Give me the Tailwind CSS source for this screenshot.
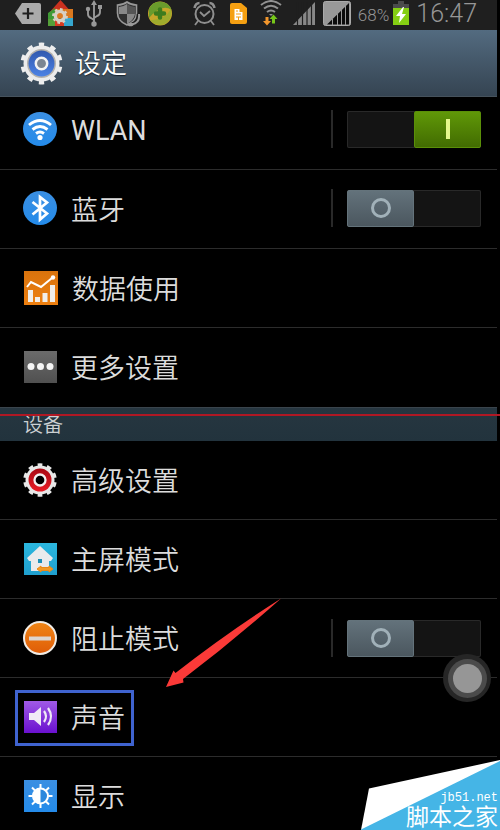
<!DOCTYPE html>
<html lang="zh-CN">
<head>
<meta charset="utf-8">
<meta name="viewport" content="width=device-width, initial-scale=1">
<title>设定</title>
<script src="https://cdn.jsdelivr.net/npm/@tailwindcss/browser@4"></script>
</head>
<body class="bg-black">
<div class="relative min-h-screen overflow-hidden bg-black pr-[3px] font-[Roboto,'Noto_Sans_CJK_SC',sans-serif] text-[#dcdcdc]">

  <!-- Status bar -->
  <div class="flex h-[30px] items-center justify-between bg-[#1f1f1f] pr-5 pl-[15px] text-[#969696]">
    <div class="flex gap-[7px]">
      <svg class="h-[30px] w-[26px]" viewBox="15 0 26 30" aria-hidden="true"><path d="M22 3H39q2 0 2 2V22q0 2-2 2H22L15 13.500z" fill="#aaa"/><path d="M28 8v11M22.500 13.500h11" stroke="#1f1f1f" stroke-width="2.200"/></svg>
      <svg class="h-[30px] w-[25px]" viewBox="48 0 25 30" aria-hidden="true"><path d="M48 14L60.500 0 73 14z" fill="#c9311f"/><path d="M48 13l7-5v18h-7z" fill="#3f9a35"/><path d="M55 9h18v9H55z" fill="#d9781f"/><path d="M61 18h12v8H61z" fill="#36a7cf"/><path d="M48 19h8v7h-8z" fill="#55a038"/><path d="M55 20h9v6h-9z" fill="#d63b22"/><circle cx="60" cy="16" r="4.500" fill="none" stroke="#d8d0c4" stroke-width="3.600"/><circle cx="60" cy="16" r="6.800" fill="none" stroke="#d8d0c4" stroke-width="2.200" pathLength="16" stroke-dasharray="1"/><circle cx="60" cy="16" r="2.700" fill="#dc7b20"/></svg>
      <svg class="h-[30px] w-[28px]" viewBox="80 0 28 30" aria-hidden="true"><g fill="none" stroke="#999" stroke-width="1.900"><path d="M94 4v20M88 9v5q0 3 3 4l3 2M100 8v4q0 3-3 4l-3 2"/></g><path d="M94 0l3 5h-6zM98 5h4v4h-4z" fill="#999"/><circle cx="88" cy="9" r="2.200" fill="#999"/><circle cx="94" cy="24" r="2.700" fill="#999"/></svg>
      <svg class="h-[30px] w-[26px]" viewBox="115 0 26 30" aria-hidden="true"><path d="M127 2q4 3 9.500 3v8q0 8-9.500 12-9.500-4-9.500-12V5q5.500 0 9.500-3z" fill="#303030" stroke="#999" stroke-width="1.600"/><path d="M127 4v10h-8V7q4 0 8-3zM127 14h8q-1 6-8 10z" fill="#888"/><path d="M127 4q4 3 8 3v7h-8z" fill="#555"/><path d="M139 14q1 9-7 11" fill="none" stroke="#1f1f1f" stroke-width="5"/><path d="M139 14q1 9-7 10.500" fill="none" stroke="#999" stroke-width="2"/><ellipse cx="130.500" cy="24.500" rx="3" ry="1.800" fill="#999"/></svg>
      <svg class="h-[30px] w-[24px]" viewBox="148 0 24 30" aria-hidden="true"><circle cx="160" cy="13.500" r="12" fill="#c7a72a"/><path d="M149 9A12 12 0 0 1 171.500 10Q162 3 149 18z" fill="#699b2c"/><path d="M150 20q14 1 21-11 2 10-6 15-9 3-15-4z" fill="#9fac2d"/><path d="M160 9.500v8M156 13.500h8" stroke="#3e7c1e" stroke-width="4.500" stroke-linecap="round"/></svg>
    </div>
    <div class="flex items-center gap-[7px]">
      <svg class="h-[30px] w-[24px]" viewBox="195 0 24 30" aria-hidden="true"><g fill="none" stroke="#8f8f8f" stroke-width="2"><circle cx="206.500" cy="14" r="9"/><path d="M202 12l4 4 6-5M200 21l-3 4M213 21l3 4" stroke-width="1.800"/><path d="M196.500 8q1-5 5-5M216.500 8q-1-5-5-5" stroke-width="2.600"/></g></svg>
      <svg class="h-[30px] w-[28px]" viewBox="225 0 28 30" aria-hidden="true"><path d="M233 3h9l6 5v14q0 2-2 2h-13q-2 0-2-2V5q0-2 2-2z" fill="#f5a012"/><path d="M235.500 9h5v3h3v8h-8z" fill="#fff"/><path d="M237 11h2M237 14h5M237 17h5M239.500 17v3" stroke="#f5a012"/></svg>
      <svg class="h-[30px] w-[26px]" viewBox="261 0 26 30" aria-hidden="true"><g fill="none" stroke="#929292" stroke-width="2"><path d="M263 5q10-8 20 0M266 8.500q7-5.500 14 0M269 12q4-3 8 0"/></g><path d="M271 14h4l-2 2z" fill="#929292"/><path d="M267.500 17h3v4h2.500l-4 4.500-4-4.500h2.500z" fill="#f2962c"/><path d="M274 23.500V19h-2.500l4-4.500 4 4.500H277v4.500z" fill="#76c61a"/></svg>
      <svg class="h-[30px] w-[24px]" viewBox="294 0 24 30" aria-hidden="true"><path d="M295 25L317 2V25z" fill="#888"/><path d="M299.500 2v24M304.500 2v24M309 2v24M313.500 2v24" stroke="#1f1f1f" stroke-width="1.200"/></svg>
      <svg class="h-[30px] w-[28px]" viewBox="325 0 28 30" aria-hidden="true"><rect x="325.500" y="1.500" width="27" height="24" rx="2" fill="#999" stroke="#aaa"/><path d="M329 24.500L351 3V24.500z" fill="#0c0c0c"/><path d="M334.500 19v6M339.500 14v11M343.500 10v15M347.500 6v19" stroke="#999" stroke-width="1"/></svg>
      <div class="flex items-center gap-1">
        <span class="text-[17px] leading-7 font-light">68%</span>
        <svg class="h-[30px] w-[16px]" viewBox="392 0 16 30" aria-hidden="true"><path d="M397 1h6v3h5v5h-16V4h5z" fill="#4b4b4b"/><path d="M392 8h16v17h-16z" fill="#85cf13"/><path d="M402 7l-7 9h4l-1 7 7-9h-4l2-7z" fill="#fff"/></svg>
      </div>
      <time class="pb-0.5 text-[25px] leading-7 font-light">16:47</time>
    </div>
  </div>

  <!-- Title bar -->
  <header class="flex h-[67px] items-center gap-3 border-b border-[#46525c] bg-linear-to-b from-[#536b80] to-[#354452] pl-5">
    <svg class="size-[43px]" viewBox="-21.500 -21.500 43 43" aria-hidden="true">
      <defs><linearGradient id="blue" x2="0" y2="1"><stop stop-color="#3158ae"/><stop offset="1" stop-color="#4c82e4"/></linearGradient></defs>
      <circle r="18.500" fill="none" stroke="#eee" stroke-width="5" pathLength="20" stroke-dasharray=".9 1.100" stroke-dashoffset=".45" transform="rotate(-90)"/>
      <circle r="18" fill="#ececec"/><circle r="14.500" fill="#b5b2ad"/><circle r="13" fill="url(#blue)"/><circle r="5.700" fill="#7b8592" stroke="#f2f2f2" stroke-width="2.500"/>
    </svg>
    <h1 class="pt-0.5 text-[26px] leading-8 font-[350] text-white [text-shadow:0_1px_1px_#18222c]">设定</h1>
  </header>

  <main class="text-[27px] leading-9">
    <section>
      <div class="flex h-[73px] items-center border-b border-[#2c2c2c] pr-4 pb-2 pl-[23px]">
        <svg class="size-[34px]" viewBox="0 0 34 34" aria-hidden="true"><defs><linearGradient id="sky" x2="0" y2="1"><stop stop-color="#3b8fe2"/><stop offset="1" stop-color="#248bea"/></linearGradient></defs><circle cx="17" cy="17" r="17" fill="url(#sky)"/><g fill="none" stroke="#fff" stroke-width="2.900"><path d="M6 13q11-9 22 0M9.500 17.500q7.500-6 15 0M13 21.500q4-3 8 0"/></g><circle cx="17" cy="25.500" r="2.600" fill="#fff"/></svg>
        <label for="wlan" class="ml-3.5 flex-1 pt-1">WLAN</label>
        <span class="h-[38px] w-0.5 bg-[#292929]"></span>
        <label class="ml-3.5 flex h-[37px] w-[134px] justify-end rounded-xs bg-[#141414] ring-1 ring-[#292929] ring-inset">
          <input id="wlan" type="checkbox" checked class="sr-only">
          <span class="flex h-full w-[67px] items-center justify-center rounded-xs border border-[#5a8f08] bg-linear-to-b from-[#609808] to-[#426c02]"><span class="h-5 w-1 bg-[#e5f88c]"></span></span>
        </label>
      </div>
      <div class="flex h-[79px] items-center border-b border-[#2c2c2c] pr-4 pb-0.5 pl-[23px]">
        <svg class="size-[34px]" viewBox="0 0 34 34" aria-hidden="true"><circle cx="17" cy="17" r="17" fill="url(#sky)"/><path d="M9.500 11L24 22.500l-7 6V6l7 5.500L9.500 23.500" fill="none" stroke="#fff" stroke-width="2.700"/></svg>
        <label for="bluetooth" class="ml-3.5 flex-1 pt-1.5 font-[350]">蓝牙</label>
        <span class="h-[38px] w-0.5 bg-[#292929]"></span>
        <label class="ml-3.5 flex h-[37px] w-[134px] rounded-xs bg-[#141414] ring-1 ring-[#292929] ring-inset">
          <input id="bluetooth" type="checkbox" class="sr-only">
          <span class="flex h-full w-[67px] items-center justify-center rounded-xs border border-[#64737b] bg-linear-to-b from-[#63727b] to-[#4b575f]"><span class="size-5 rounded-full border-[3px] border-[#a1b1b9]"></span></span>
        </label>
      </div>
      <a href="#data" class="flex h-[79px] items-center border-b border-[#2c2c2c] pl-[23px] font-[350]">
        <svg class="size-[35px]" viewBox="0 0 35 35" aria-hidden="true"><defs><linearGradient id="orange" x2="0" y2="1"><stop stop-color="#d9730d"/><stop offset="1" stop-color="#ee8010"/></linearGradient></defs><path d="M1 0h34v34H1z" fill="url(#orange)"/><path d="M5 19h5v12H5zM12 26h5v5h-5zM19.500 22h5v9h-5zM27 14h5v17h-5z" fill="#f1eee9"/><path d="M4 16l4-5 10 5L29 7" fill="none" stroke="#fff" stroke-width="2"/><circle cx="30" cy="6.500" r="2.200" fill="#fff"/></svg>
        <span class="ml-3.5 pt-1">数据使用</span>
      </a>
      <a href="#more" class="flex h-[79px] items-center pb-0.5 pl-[23px] font-[350]">
        <svg class="size-[34px]" viewBox="0 0 34 34" aria-hidden="true"><defs><linearGradient id="gray" x2="0" y2="1"><stop stop-color="#6b6b6b"/><stop offset="1" stop-color="#505050"/></linearGradient></defs><path d="M1 1h33v32H1z" fill="url(#gray)"/><g fill="#f4f4f4"><circle cx="8" cy="16.500" r="3.500"/><circle cx="17.500" cy="16.500" r="3.500"/><circle cx="27" cy="16.500" r="3.500"/></g></svg>
        <span class="ml-3.5 pt-1">更多设置</span>
      </a>
    </section>

    <section>
      <h2 class="flex h-[34px] items-center border-t border-[#3a444c] bg-linear-to-b from-[#263640] to-[#22333d] pl-[23px] text-[20px] leading-7 font-[350] text-[#ccd0d2]">设备</h2>
      <a href="#advanced" class="flex h-[79px] items-center border-b border-[#2c2c2c] pl-[23px] font-[350]">
        <svg class="size-[34px]" viewBox="-17 -17 34 34" aria-hidden="true"><defs><linearGradient id="red" x2="0" y2="1"><stop stop-color="#a90913"/><stop offset="1" stop-color="#e91d26"/></linearGradient></defs><circle r="14.500" fill="none" stroke="#e8e8e8" stroke-width="4.600" pathLength="20" stroke-dasharray="1" stroke-dashoffset=".5" transform="rotate(-90)"/><circle r="14.500" fill="#e8e8e8"/><circle r="11.500" fill="url(#red)"/><circle r="5.500" fill="#000" stroke="#f2f2f2" stroke-width="2.300"/></svg>
        <span class="ml-3.5 pt-1">高级设置</span>
      </a>
      <a href="#home-mode" class="flex h-[79px] items-center border-b border-[#2c2c2c] pl-[23px] font-[350]">
        <svg class="size-[34px]" viewBox="0 0 34 34" aria-hidden="true"><defs><linearGradient id="cyan" x2="0" y2="1"><stop stop-color="#2bb7df"/><stop offset="1" stop-color="#1f9fce"/></linearGradient></defs><path d="M1 1h33v32H1z" fill="url(#cyan)"/><path d="M17 4l13 12-2 3h-2v10H8V19H6l-2-3z" fill="#e9eaec"/><path d="M15 17h4v4h-4z" fill="#1c8fb8"/><path d="M14 27l4-3v1.500h8V24l4 3-4 3v-1.500h-8V30z" fill="#f29a24" stroke="#e98918"/></svg>
        <span class="ml-3.5 pt-1">主屏模式</span>
      </a>
      <div class="flex h-[79px] items-center border-b border-[#2c2c2c] pr-4 pl-[23px]">
        <svg class="size-[34px]" viewBox="0 0 34 34" aria-hidden="true"><defs><linearGradient id="amber" x2="0" y2="1"><stop stop-color="#f08616"/><stop offset="1" stop-color="#df5c08"/></linearGradient></defs><circle cx="17" cy="17" r="16" fill="url(#amber)" stroke="#f0ece6" stroke-width="2"/><path d="M6 15.500h22v4H6z" fill="#ddd5ce"/></svg>
        <label for="blocking" class="ml-3.5 flex-1 pt-1 font-[350]">阻止模式</label>
        <span class="h-[38px] w-0.5 bg-[#292929]"></span>
        <label class="ml-3.5 flex h-[37px] w-[134px] rounded-xs bg-[#141414] ring-1 ring-[#292929] ring-inset">
          <input id="blocking" type="checkbox" class="sr-only">
          <span class="flex h-full w-[67px] items-center justify-center rounded-xs border border-[#64737b] bg-linear-to-b from-[#63727b] to-[#4b575f]"><span class="size-5 rounded-full border-[3px] border-[#a1b1b9]"></span></span>
        </label>
      </div>
      <a href="#sound" class="flex h-[79px] items-center border-b border-[#2c2c2c] pt-0.5 pl-[15px] font-[350]">
        <span class="flex h-14 items-center border-[3px] border-[#3f63cf] pr-1.5 pb-0.5 pl-[5px]">
          <svg class="size-[34px]" viewBox="0 0 34 34" aria-hidden="true"><defs><linearGradient id="purple" x2="0" y2="1"><stop stop-color="#a05ae6"/><stop offset="1" stop-color="#6a10cf"/></linearGradient></defs><path d="M1 1h33v32H1z" fill="url(#purple)"/><path d="M6 13h5l7-6v19l-7-6H6z" fill="#f0eaf6"/><path d="M21 11q4 5.500 0 11M25 8q6 8.500 0 17" fill="none" stroke="#f0eaf6" stroke-width="2.200"/></svg>
          <span class="ml-3.5 pt-1">声音</span>
        </span>
      </a>
      <a href="#display" class="flex h-[73px] items-center pt-1 pl-[23px] font-[350]">
        <svg class="size-[34px]" viewBox="0 0 34 34" aria-hidden="true"><path d="M1 1h33v32H1z" fill="url(#sky)"/><circle cx="17.500" cy="17" r="7.500" fill="#2b88dd" stroke="#fff" stroke-width="2"/><path d="M17.500 9a8 8 0 0 0 0 16z" fill="#fff"/><path d="M17.500 5v5M17.500 24v5M5.500 17h4M25.500 17h4M9 8.500l3 3M26 8.500l-3 3M9 25.500l3-3M26 25.500l-3-3" stroke="#fff" stroke-width="2"/></svg>
        <span class="ml-3.5 pt-1">显示</span>
      </a>
    </section>
  </main>

  <!-- Annotations over the list -->
  <div class="absolute inset-x-0 top-[414px] z-10 h-0.5 bg-[#b01824]"></div>
  <svg class="pointer-events-none absolute top-[598px] left-[165px] h-[90px] w-[118px]" viewBox="165 598 118 90" aria-hidden="true"><path d="M281 598.500Q228 632 175.500 673L173.500 670.500 166 687 183.500 682.500 183 679Q232 642 281 598.500z" fill="#fb3a38"/></svg>

  <!-- Floating assist button -->
  <button type="button" aria-label="辅助" class="absolute top-[654px] right-[9px] flex size-12 items-center justify-center rounded-full bg-[#262626]">
    <span class="flex size-[39px] items-center justify-center rounded-full bg-[#4b4b4b]"><span class="size-[29px] rounded-full bg-[#969696]"></span></span>
  </button>

  <!-- Site mark -->
  <div class="absolute right-0 bottom-0 h-[70px] w-[140px] text-white">
    <svg class="absolute inset-0 size-full" viewBox="360 760 140 70" aria-hidden="true"><path d="M500 760L369 788.500 361 830H500z" fill="#fff"/><path d="M500 761L361 829.500V830H500z" fill="#45b5e6"/></svg>
    <div class="relative flex h-full flex-col items-end justify-end pr-0.5">
      <span class="font-['Liberation_Mono',monospace] text-[12px] leading-4">jb51.net</span>
      <span class="text-[23px] leading-6">脚本之家</span>
    </div>
  </div>
</div>
</body>
</html>
